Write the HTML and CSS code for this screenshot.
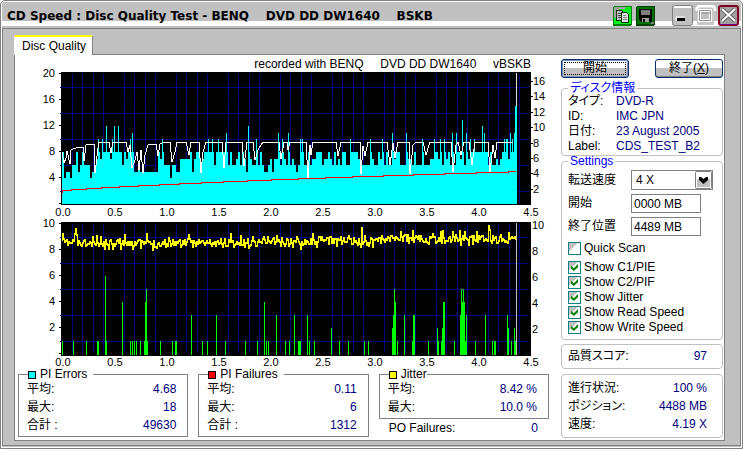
FILE: index.html
```html
<!DOCTYPE html>
<html lang="ja">
<head>
<meta charset="utf-8">
<title>CD Speed : Disc Quality Test</title>
<link rel="stylesheet" href="styles.css">
</head>
<body>
<div class="window">
  <header class="titlebar">
    <h1 class="title">CD Speed : Disc Quality Test - BENQ    DVD DD DW1640    BSKB</h1>
    <div class="tools">
      <button class="tool" type="button" aria-label="Copy">
        <svg width="19" height="20" viewBox="0 0 19 20" shape-rendering="crispEdges">
          <rect width="19" height="20" rx="2" fill="#008000"/><rect x="1" y="1" width="17" height="17" fill="#00f020"/>
          <path d="M1 1h12l-2 2H6v5l-3 4H1z" fill="#a0a0a0"/>
          <path d="M3.500 4.500h5l2 2v8h-7z" fill="#c0c0c0" stroke="#003000"/><path d="M5 7h3M5 9h3M5 11h3" stroke="#404040"/>
          <path d="M8.500 6.500h5l2 2v8h-7z" fill="#e0e0e0" stroke="#003000"/><path d="M10 9h3M10 11h4M10 13h4" stroke="#808080"/>
        </svg>
      </button>
      <button class="tool" type="button" aria-label="Save">
        <svg width="19" height="20" viewBox="0 0 19 20" shape-rendering="crispEdges">
          <rect width="19" height="20" rx="2" fill="#004000"/><rect x="1" y="1" width="17" height="17" fill="#007000"/>
          <path d="M3 3h13v13H5l-2-2z" fill="#000"/><path d="M6 4h8v5H6z" fill="#808080"/><path d="M6 12h7v4H6z" fill="#a0a0a0"/><path d="M7 13h2v3H7z" fill="#000"/><path d="M5 4v5" stroke="#808080"/><path d="M15 16h3v2h-3z" fill="#808080"/>
        </svg>
      </button>
    </div>
    <div class="controls">
      <button class="tool" type="button" aria-label="Minimize">
        <svg width="21" height="21" viewBox="0 0 21 21">
          <rect x=".5" y=".5" width="20" height="20" rx="2" fill="#c0c0c0" stroke="#808080"/><path d="M2 2h17" stroke="#fff" stroke-width="2"/><path d="M5 13h8v3H5z" fill="#000"/><path d="M4 16v-4h9" fill="none" stroke="#fff"/>
        </svg>
      </button>
      <button class="tool" type="button" aria-label="Maximize">
        <svg width="21" height="21" viewBox="0 0 21 21">
          <path d="M2 6V3l2-2h14l2 2v3" fill="none" stroke="#fff" stroke-width="3"/><path d="M2 20V5h17v15z" fill="#c8c8c8"/><rect x="4.500" y="5.500" width="11" height="10" fill="#c0c0c0" stroke="#fff" stroke-width="3"/><path d="M4.500 5.500h11v10h-11zM6 8h9" fill="none" stroke="#909090"/>
        </svg>
      </button>
      <button class="tool" type="button" aria-label="Close">
        <svg width="21" height="21" viewBox="0 0 21 21">
          <rect x="1" y="1" width="19" height="19" rx="2" fill="#a0a0a0" stroke="#800020" stroke-width="2"/><path d="M2 19.500h17" stroke="#800080"/><path d="M4 4l13 12M17 4L4 16" stroke="#606060" stroke-width="4"/><path d="M4 4l13 12M17 4L4 16" stroke="#fff" stroke-width="2"/>
        </svg>
      </button>
    </div>
  </header>

  <main class="frame">
    <button class="tab" type="button">Disc Quality</button>
    <div class="panel">
      <section class="results">
        <p class="recorder">recorded with BENQ     DVD DD DW1640     vBSKB</p>
        <svg class="chart" id="errors" viewBox="15 70 541 150" role="img" aria-label="PI Errors"></svg>
        <svg class="chart" id="failures" viewBox="15 220 541 149" role="img" aria-label="PI Failures"></svg>
        <div class="stats">
          <fieldset class="stat">
            <legend><span class="swatch cyan"></span>PI Errors</legend>
            <dl><dt>平均:</dt><dd>4.68</dd><dt>最大:</dt><dd>18</dd><dt>合計 :</dt><dd>49630</dd></dl>
          </fieldset>
          <fieldset class="stat">
            <legend><span class="swatch red"></span>PI Failures</legend>
            <dl><dt>平均:</dt><dd>0.11</dd><dt>最大:</dt><dd>6</dd><dt>合計 :</dt><dd>1312</dd></dl>
          </fieldset>
          <div>
            <fieldset class="stat">
              <legend class="tight"><span class="swatch yellow"></span>Jitter</legend>
              <dl><dt>平均:</dt><dd>8.42 %</dd><dt>最大:</dt><dd>10.0 %</dd></dl>
            </fieldset>
            <dl class="po"><dt>PO Failures:</dt><dd>0</dd></dl>
          </div>
        </div>
      </section>

      <aside class="sidebar">
        <div class="actions">
          <button class="push focus" type="button">開始</button>
          <button class="push" type="button">終了(<u>X</u>)</button>
        </div>
        <fieldset class="group">
          <legend>ディスク情報</legend>
          <dl class="info">
            <dt>タイプ:</dt><dd>DVD-R</dd>
            <dt>ID:</dt><dd>IMC JPN</dd>
            <dt>日付:</dt><dd>23 August 2005</dd>
            <dt>Label:</dt><dd>CDS_TEST_B2</dd>
          </dl>
        </fieldset>
        <fieldset class="group settings">
          <legend>Settings</legend>
          <div class="fields">
            <label for="speed">転送速度</label>
            <span class="combo">
              <select id="speed"><option>4 X</option></select>
              <svg class="arrow" width="17" height="18" viewBox="0 0 17 18"><rect x=".5" y=".5" width="16" height="17" rx="1" fill="#fff" stroke="#808080"/><path d="M2 8h13v8H2z" fill="#c0c0c0"/><path d="M4 6h2l2.500 2L11 6h2v3l-4.500 4L4 9z" fill="#000"/></svg>
            </span>
            <label for="start">開始</label><input id="start" class="box" type="text" value="0000 MB">
            <label for="end">終了位置</label><input id="end" class="box" type="text" value="4489 MB">
          </div>
          <label class="check lone"><input type="checkbox">Quick Scan</label>
          <label class="check"><input type="checkbox" checked>Show C1/PIE</label>
          <label class="check"><input type="checkbox" checked>Show C2/PIF</label>
          <label class="check"><input type="checkbox" checked>Show Jitter</label>
          <label class="check"><input type="checkbox" checked>Show Read Speed</label>
          <label class="check"><input type="checkbox" checked>Show Write Speed</label>
        </fieldset>
        <dl class="group tally"><dt>品質スコア:</dt><dd>97</dd></dl>
        <dl class="group tally progress"><dt>進行状況:</dt><dd>100 %</dd><dt>ポジション:</dt><dd>4488 MB</dd><dt>速度:</dt><dd>4.19 X</dd></dl>
      </aside>
    </div>
  </main>
</div>
<script src="chart.js"></script>
</body>
</html>
```
FILE: styles.css
```css
* { box-sizing: border-box; }
body, h1, p, dl, dd, fieldset, legend { margin: 0; padding: 0; }
body, button, input, select {
  font: 12px/15px "Liberation Sans", "Noto Sans CJK JP", sans-serif;
  font-feature-settings: "palt";
  color: #000;
}
body { background: #fff; }
.window {
  min-height: 100vh;
  display: flex;
  flex-direction: column;
  background: #c0c0c0;
  border: 1px solid #808080;
  border-radius: 5px 5px 0 0;
  box-shadow: inset 0 0 0 1px #fff;
}
.titlebar {
  height: 25px;
  display: flex;
  align-items: flex-end;
  padding: 0 3px 0 6px;
  background: linear-gradient(#fff, #fff) 0 100% / 100% 5px no-repeat;
}
.title {
  flex: 1;
  font: bold 12px/20px "DejaVu Sans", sans-serif;
  white-space: pre;
}
.tools, .controls { display: flex; }
.tools { gap: 4px; margin-right: 17px; }
.controls { gap: 2px; }
.tool { border: 0; padding: 0; background: none; }
.tool svg { display: block; }
.frame {
  flex: 1;
  margin: 2px 1px;
  padding: 6px 15px 4px 11px;
  border: 1px solid #808080;
}
.tab {
  position: relative;
  display: block;
  height: 20px;
  margin-bottom: -1px;
  padding: 0 6px 0 7px;
  background: #fff;
  border: solid #808080;
  border-width: 0 1px;
  border-left-color: #fff;
  border-top: 2px solid #ff0;
  border-radius: 2px 2px 0 0;
}
.panel {
  display: flex;
  gap: 5px;
  padding-right: 1px;
  background: #fff;
  border: 1px solid #808080;
}
.results { flex: 1; min-width: 0; }
.recorder {
  height: 15px;
  padding: 2px 25px 0 0;
  text-align: right;
  white-space: pre;
}
.chart { display: block; width: 100%; overflow: visible; font-size: 11px; }
.stats {
  display: grid;
  grid-template-columns: repeat(3, 1fr);
  gap: 10px;
  padding: 0 7px 3px 3px;
}
.stat { border: 1px solid #808080; padding: 0 11px 2px 8px; min-width: 0; }
.stat legend {
  display: flex;
  gap: 4px;
  line-height: 11px;
  padding-right: 6px;
  margin-left: 1px;
}
.stat .tight { padding-right: 0; }
.swatch { width: 8px; height: 8px; margin-top: 2px; border: 1px solid #000; }
.cyan { background: #0ff; }
.red { background: #f00; }
.yellow { background: #ff0; }
dl { display: grid; grid-template-columns: auto 1fr; }
dt { white-space: nowrap; }
dd { color: #000080; white-space: nowrap; }
.stats dl { line-height: 18px; }
.stats dd { text-align: right; }
.po { padding: 0 11px 0 10px; }
.sidebar { width: 162px; padding-top: 4px; }
.actions { display: flex; justify-content: space-between; margin-bottom: 5px; }
.push {
  width: 68px;
  height: 19px;
  padding: 0;
  background: linear-gradient(#fff 50%, #c0c0c0 50%);
  border: 1px solid #003070;
  border-radius: 3px;
  box-shadow: inset 0 -1px #808080;
}
.focus { outline: 1px dotted #000; outline-offset: -4px; box-shadow: inset 0 0 0 1px #8090b0; }
.group { border: 1px solid #c0c0c0; border-radius: 4px; padding: 0 6px 1px; min-width: 0; }
.group legend { line-height: 10px; color: #00f; padding: 0 2px; }
.info { grid-template-columns: 48px 1fr; padding-top: 1px; }
.settings { padding-bottom: 4px; }
.fields {
  display: grid;
  grid-template-columns: 63px 1fr;
  gap: 4px 0;
  align-items: center;
  justify-items: start;
  padding-top: 4px;
}
.combo { position: relative; width: 82px; }
.combo select {
  display: block;
  width: 100%;
  height: 20px;
  appearance: none;
  padding: 0 20px 0 4px;
  background: #fff;
  border: 1px solid #808080;
  border-radius: 0;
}
.arrow { position: absolute; top: 1px; right: 1px; pointer-events: none; }
.box { width: 70px; height: 19px; padding: 0 2px; border: 1px solid #808080; background: #fff; }
.check { display: flex; align-items: center; gap: 3px; height: 15px; }
.lone { margin: 5px 0 4px; }
.check input {
  appearance: none;
  width: 13px;
  height: 13px;
  margin: 0;
  border: 1px solid #008080;
  background: linear-gradient(135deg, #c0c0c0 40%, #fff 40%);
}
.check input:checked::before {
  content: "";
  display: block;
  width: 7px;
  height: 7px;
  margin: 2px;
  background: #008000;
  clip-path: polygon(0 25%, 40% 60%, 100% 0, 100% 45%, 40% 100%, 0 65%);
}
.tally { padding: 4px 15px 4px 6px; margin-top: 4px; }
.tally dd { text-align: right; }
.progress { margin-top: 5px; line-height: 18px; }
```
FILE: chart.js
```js
const NS = "http://www.w3.org/2000/svg";

function add(svg, name, attrs, text) {
  const el = document.createElementNS(NS, name);
  for (const key in attrs) el.setAttribute(key, attrs[key]);
  if (text !== undefined) el.textContent = text;
  svg.append(el);
}

function path(svg, d, color, width) {
  add(svg, "path", { d, fill: "none", stroke: color, "stroke-width": width || 1, "shape-rendering": "crispEdges" });
}

function label(svg, x, y, anchor, text) {
  add(svg, "text", { x, y, "text-anchor": anchor }, text);
}

// Repeatable noise between 0 and 1.
function noise(seed) {
  return () => (seed = (seed * 16807) % 2147483647) / 2147483647;
}

// Black plot area with its grid, left ticks and both sets of labels.
function frame(svg, top, height, bottomLabel, leftStep, max) {
  add(svg, "rect", { x: 61, y: top, width: 470, height, fill: "#000" });
  let d = "";
  for (let x = 62; x < 531; x += 52) {
    for (const dx of [10, 20, 31, 41]) {
      if (x + dx >= 530) continue;
      for (let i = 0; i < 5; i++) d += `M${x + dx}.5 ${top + 2 + i * 26}v25`;
    }
  }
  for (let i = 0; i < 5; i++) d += `M60 ${top + 15 + i * 26}.5h469`;
  path(svg, d, "#000080");
  for (let i = 0; i <= 5; i++) {
    path(svg, `M59 ${top + 1 + i * 26}.5h3`, "#000");
    if (i < 5) label(svg, 55, top + 5 + i * 26, "end", max - i * leftStep);
  }
  for (let i = 0; i < 10; i++) label(svg, 63 + i * 52, bottomLabel, "middle", (i / 2).toFixed(1));
}

// PI errors: one bar every two pixels. Each range holds its last bar and the values it varies over.
const ranges = [
  [16, "4556656"], [34, "67887898"], [48, "5566578"], [60, "56667768"], [70, "5667678"],
  [85, "6786889"], [113, "56667678"], [122, "66657678"], [147, "6768768"], [156, "66768"],
  [175, "6667678"], [192, "6768768"], [200, "66768"], [212, "687898"], [219, "66768"], [227, "7899aa"]
];
const spikes = {
  0: 8, 7: 8, 10: 8, 18: 10, 20: 10, 22: 12, 25: 10, 26: 12, 28: 12, 34: 10, 35: 11, 50: 10, 54: 4,
  73: 10, 75: 10, 78: 10, 82: 11, 93: 12, 97: 10, 108: 11, 110: 10, 113: 11, 119: 10, 120: 10, 144: 10,
  154: 10, 160: 10, 165: 11, 172: 11, 180: 10, 186: 10, 189: 10, 191: 10, 195: 11, 197: 11, 200: 13,
  202: 11, 204: 10, 206: 10, 210: 12, 211: 11, 221: 10, 224: 11, 225: 10, 226: 11, 227: 15
};

const one = document.getElementById("errors");
frame(one, 72, 133, 216, 4, 20);
const pick = noise(77);
let bars = "";
for (let i = 0; i < 227; i++) {
  const values = ranges.find(range => i <= range[0])[1];
  const drawn = Number(values[Math.floor(pick() * values.length)]) || 10;
  const v = spikes[i] || drawn;
  const x = 63 + i * 2;
  // Spikes are a single pixel wide above the neighbouring level.
  if (spikes[i] > 9) {
    bars += `M${x} 205V152`;
    add(one, "rect", { x: x - 1, y: Math.round(204 - v * 6.5), width: 1, height: 60, fill: "#0ff" });
  } else {
    bars += `M${x} 205V${Math.round(204 - v * 6.5)}`;
  }
}
path(one, bars, "#0ff", 2);
path(one, "M516 205V106", "#0ff", 2);
path(one, "M516.5 106V73", "#e0e0e0");
path(one, "M62 152L64 163L66 158L67 151L70 164L71 150L78 147L83 147L84 161L86 145L94 144L95 173L98 148L99 142H109L111 153L113 142H126L128 152L130 145L132 168L135 160L137 152L139 170L141 150L143 173L145 155L148 145L156 144L158 156L160 144L164 142H170L172 162L175 152L177 142H186L189 155L191 142H199L201 173L203 152L206 142H222L224 168L226 142H242L244 166L247 142H253L255 160L258 150L261 145L263 142H279L281 159L284 142H287L288 150L290 142H306L308 178L310 145L311 155L313 142H336L338 156L341 142H360L361 174L363 146L365 156L368 142H387L390 165L393 143L395 158L398 142H409L410 174L413 145L416 142H423L426 155L430 142H451L453 172L456 145L458 142L461 155L464 142H469L472 165L475 142H488L490 172L493 145L495 158L497 142H513", "#fff");
path(one, "M62.5 193V190.500H71V189.500H86V188.500H101V187.500H119V186.500H138V185.500H159V184.500H179V183.500H201V182.500H223V181.500H247V180.500H271V179.500H298V178.500H325V177.500H352V176.500H383V175.500H413V174.500H444V173.500H476V172.500H508V171.500H516", "#f00");
path(one, "M61 204.5H531M530.500 72V205", "#000");
[16, 14, 12, 10, 8, 6, 4, 2].forEach((v, i) => {
  const y = Math.round(81 + i * 15.4);
  path(one, `M530 ${y}.5h3`, "#000");
  label(one, 533, y + 4, "start", v);
});

const two = document.getElementById("failures");
frame(two, 222, 134, 366, 2, 10);
[10, 8, 6, 4, 2].forEach((v, i) => label(two, 532, 229 + i * 26, "start", v));

// PI failures: x positions by height.
const failures = {
  1: [62, 73, 86, 97, 98, 106, 130, 132, 134, 136, 140, 144, 147, 160, 172, 175, 176, 202, 207, 225, 245, 257, 266, 268, 285, 289, 298, 299, 300, 309, 314, 339, 348, 364, 368, 397, 412, 428, 438, 441, 454, 465, 475, 492, 494, 495, 511, 515],
  2: [331, 392, 437, 442, 508, 514],
  3: [191, 216, 276, 294, 307, 393, 404, 413, 414, 460, 466, 485, 507],
  4: [122, 145, 264, 395, 443, 444, 462, 464],
  5: [146, 394, 461, 463],
  6: [105]
};
let green = "";
for (const v in failures) for (const x of failures[v]) green += `M${x}.5 355V${354 - v * 13}`;
path(two, green, "#0f0");

// Jitter trace: a vertical stroke per pixel column around a slowly changing level, with a few peaks.
const peaks = { 62: 234, 74: 234, 75: 229, 76: 235, 146: 234, 230: 234, 361: 228, 442: 231, 459: 231, 488: 226, 489: 230 };
const shake = noise(11);
let jitter = "";
let last = 240;
for (let x = 62; x < 517; x++) {
  const level = x < 260 ? 243 : x < 370 ? 241 : 239;
  const y = peaks[x] || Math.round(level + (shake() - 0.5) * (x % 4 ? 7 : 15) + Math.sin(x / 11));
  jitter += `M${x}.5 ${Math.min(y, last) - 1}V${Math.max(y, last) + 1}`;
  last = y;
}
path(two, jitter, "#ff0");
path(two, "M516.5 223V355", "#c0c0c0");
```
